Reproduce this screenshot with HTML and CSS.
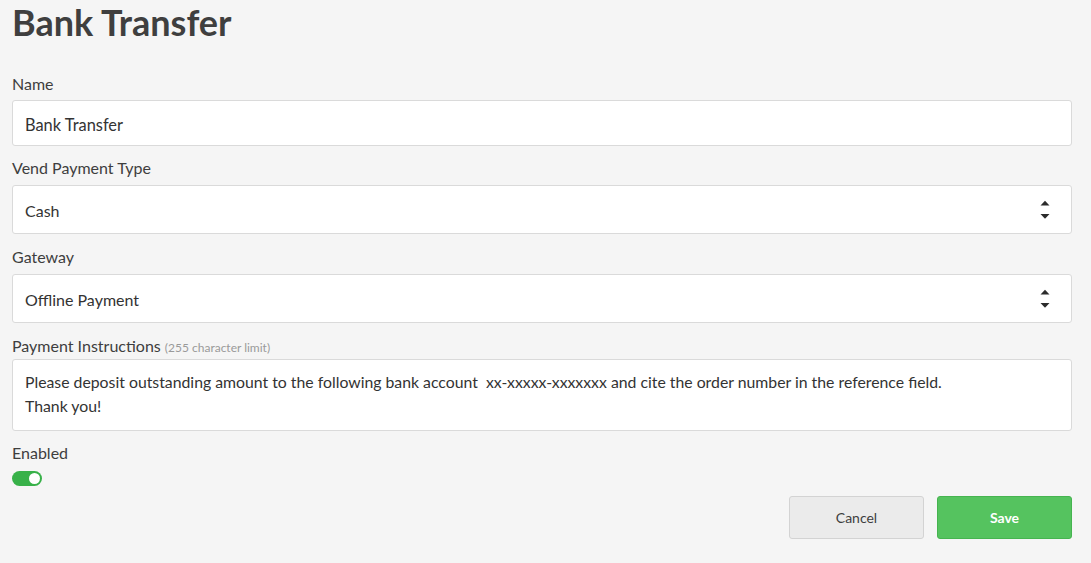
FILE: index.html
```html
<!DOCTYPE html>
<html>
<head>
<meta charset="utf-8">
<link rel="stylesheet" href="styles.css">
</head>
<body>
<div class="page">
  <h1 class="title">Bank Transfer</h1>
  <form class="form">
    <div class="field f-name">
      <label class="label">Name</label>
      <div class="input">Bank Transfer</div>
    </div>
    <div class="field f-type">
      <label class="label">Vend Payment Type</label>
      <div class="select"><span>Cash</span>
        <svg class="arrows" width="10" height="20" viewBox="0 0 10 20"><path d="M0.5 5.5 L5 0.8 L9.5 5.5 Z" fill="#2b2b2b"/><path d="M0.5 14 L9.5 14 L5 18.7 Z" fill="#2b2b2b"/></svg>
      </div>
    </div>
    <div class="field f-gateway">
      <label class="label">Gateway</label>
      <div class="select"><span>Offline Payment</span>
        <svg class="arrows" width="10" height="20" viewBox="0 0 10 20"><path d="M0.5 5.5 L5 0.8 L9.5 5.5 Z" fill="#2b2b2b"/><path d="M0.5 14 L9.5 14 L5 18.7 Z" fill="#2b2b2b"/></svg>
      </div>
    </div>
    <div class="field f-instr">
      <label class="label">Payment Instructions <span class="hint">(255 character limit)</span></label>
      <div class="textarea">Please deposit outstanding amount to the following bank account&nbsp; xx-xxxxx-xxxxxxx and cite the order number in the reference field.<br>Thank you!</div>
    </div>
    <div class="field f-enabled">
      <label class="label">Enabled</label>
      <div class="toggle"><span class="knob"></span></div>
    </div>
    <div class="actions">
      <button type="button" class="btn btn-cancel">Cancel</button>
      <button type="button" class="btn btn-save">Save</button>
    </div>
  </form>
</div>
</body>
</html>
```
FILE: styles.css
```css
* { box-sizing: border-box; }
html, body { margin: 0; padding: 0; background: #f5f5f5; }
body {
  font-family: Lato, "Open Sans", "Liberation Sans", sans-serif;
  color: #3e3e3e;
}
.page { padding: 1px 19px 0 12px; }
.title {
  margin: 0;
  font-size: 36px;
  line-height: 42px;
  font-weight: 700;
  color: #3f3f3f;
}
.form { display: flex; flex-direction: column; margin-top: 31px; }
.field { display: flex; flex-direction: column; }
.label {
  font-size: 16px;
  line-height: 20px;
  color: #3e3e3e;
  margin-bottom: 6px;
}
.hint { font-size: 12px; color: #9a9a9a; }
.input, .select, .textarea {
  background: #fff;
  border: 1px solid #dadada;
  border-radius: 3px;
  font-size: 16px;
  color: #333;
  padding: 0 12px;
}
.input { height: 46px; display: flex; align-items: center; padding-top: 2px; font-size: 16.4px; }
.f-type { margin-top: 12px; }
.f-type .label, .f-gateway .label { margin-bottom: 7px; }
.select {
  height: 49px;
  display: flex;
  align-items: center;
  justify-content: space-between;
  padding-right: 21px;
  padding-top: 1px;
}
.arrows { display: block; margin-top: -1px; }
.f-gateway { margin-top: 13px; }
.f-instr { margin-top: 13px; }
.f-instr .label { margin-bottom: 1px; }
.textarea {
  font-size: 15.8px;
  line-height: 24px;
  padding-top: 10px;
  padding-bottom: 12px;
  height: 72px;
}
.f-enabled { margin-top: 12px; }
.f-enabled .label { margin-bottom: 8px; }
.toggle {
  width: 30px;
  height: 15px;
  border-radius: 8px;
  background: #38b149;
  display: flex;
  align-items: center;
  justify-content: flex-end;
  padding-right: 2px;
}
.knob {
  width: 11px;
  height: 11px;
  border-radius: 50%;
  background: #fff;
}
.actions {
  display: flex;
  justify-content: flex-end;
  gap: 13px;
  margin-top: 10px;
}
.btn {
  width: 135px;
  height: 43px;
  border-radius: 3px;
  font-family: Lato, "Open Sans", "Liberation Sans", sans-serif;
  font-size: 14px;
  cursor: pointer;
}
.btn-cancel {
  background: #ebebeb;
  border: 1px solid #d3d3d3;
  color: #3e3e3e;
}
.btn-save {
  background: #55c35f;
  border: 1px solid #46b450;
  color: #fff;
  font-weight: 700;
}
```
